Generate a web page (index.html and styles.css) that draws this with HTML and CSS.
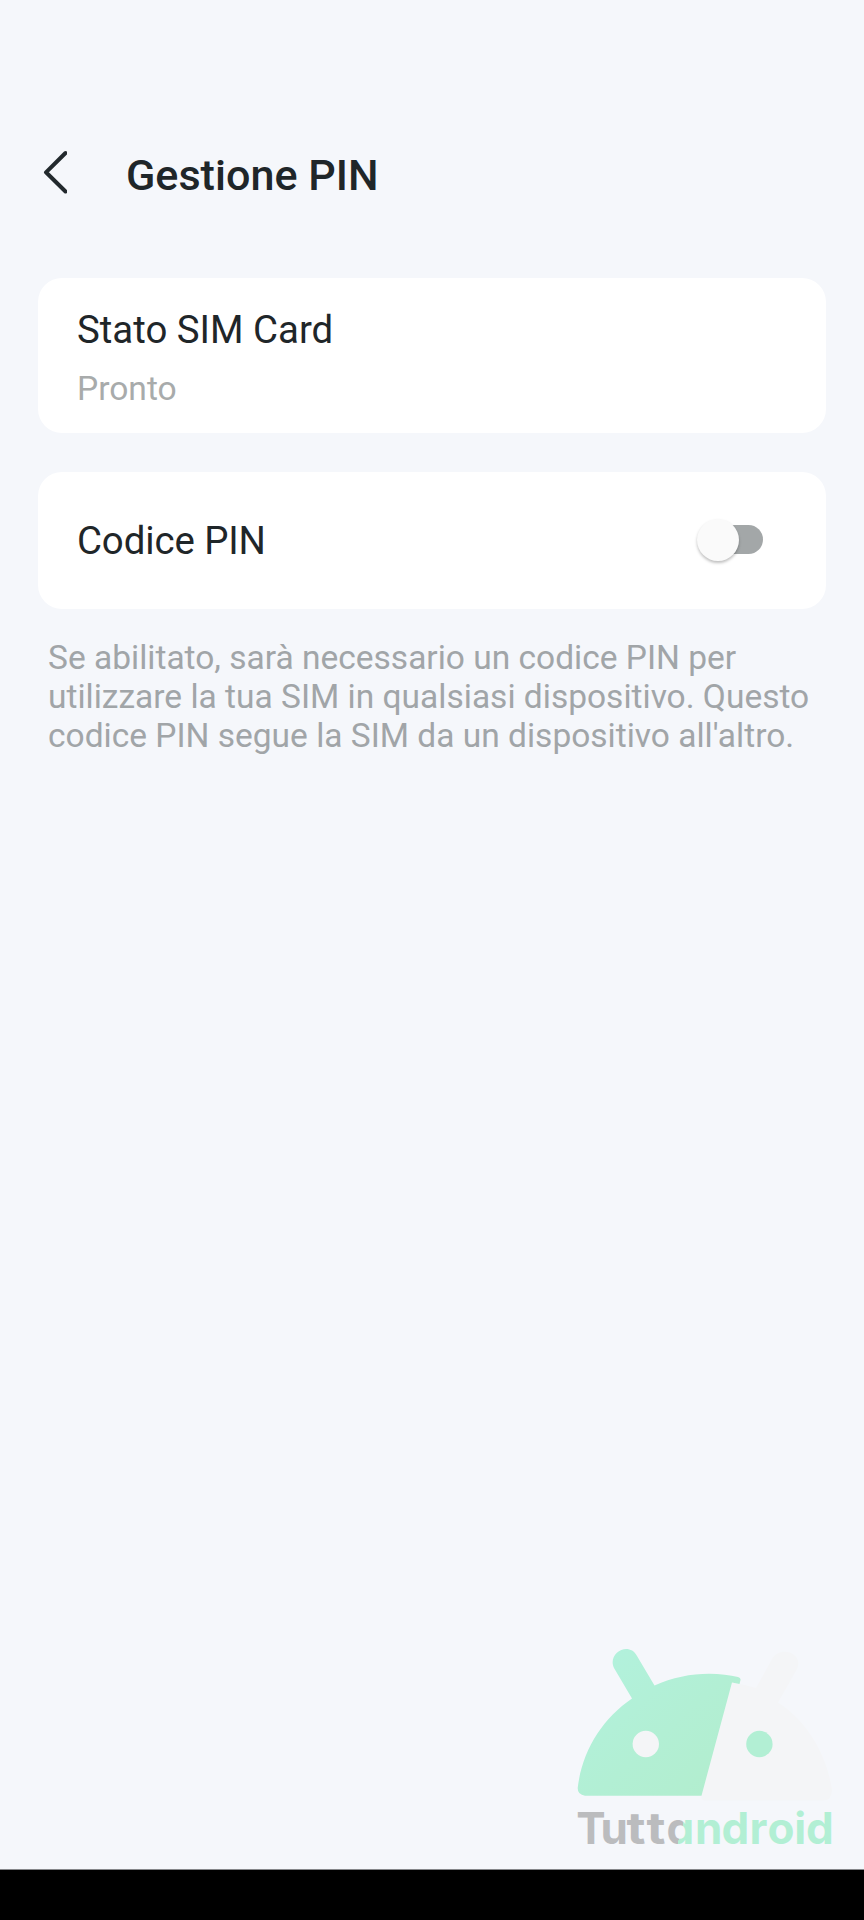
FILE: index.html
```
<!DOCTYPE html>
<html lang="it">
<head>
<meta charset="utf-8">
<title>Gestione PIN</title>
<link rel="stylesheet" href="styles.css">
</head>
<body>
<div class="screen">
  <header class="header">
    <svg class="back" width="24" height="44" viewBox="0 0 24 44" role="img" aria-label="Indietro"><path d="M22.500 3 3 22.300 22.500 41.500"/></svg>
    <h1 class="title">Gestione PIN</h1>
  </header>
  <main class="content">
    <section class="card card-status">
      <div class="label">Stato SIM Card</div>
      <div class="value">Pronto</div>
    </section>
    <section class="card card-pin">
      <div class="label label-pin">Codice PIN</div>
      <div class="switch" role="switch" aria-checked="false" aria-label="Codice PIN"><span class="thumb"></span></div>
    </section>
    <p class="hint">Se abilitato, sarà necessario un codice PIN per<br>utilizzare la tua SIM in qualsiasi dispositivo. Questo<br>codice PIN segue la SIM da un dispositivo all'altro.</p>
  </main>
  <svg class="watermark" width="300" height="220" viewBox="0 0 300 220">
    <defs>
      <linearGradient id="mint" x1="0" y1="0" x2="1" y2="1"><stop offset="0" stop-color="#b2f2de"/><stop offset=".55" stop-color="#b2efd4"/><stop offset="1" stop-color="#b2edcd"/></linearGradient>
      <linearGradient id="split" gradientUnits="userSpaceOnUse" x1="116.500" y1="195" x2="117.500" y2="195.270"><stop offset=".45" stop-color="#bbbcbe"/><stop offset=".55" stop-color="#b2efd4"/></linearGradient>
    </defs>
    <path class="pale" d="M168 46.500Q180 48.500 192 52L208 23C216 9 240 17 233 33L214 66.500C243 85 263 119 268 154Q267.500 164 260 164.500H140Q137 164 137.500 160Z"/>
    <path fill="url(#mint)" d="M68 62.500 50 32C43 17 65 5 73 20L90.500 49.500C108 41.500 127 37.700 145 37.700 156 37.700 166 39 174 41Q177 42 176.500 44L175.500 48 168 46.500 137.500 159.700H21Q13.500 159 13.700 152C18 115 38 83 68 62.500Z"/>
    <circle class="pale" cx="81.800" cy="108" r="13.200"/>
    <circle class="mint" cx="195.400" cy="108" r="13.200"/>
    <g class="wordmark">
      <text class="gray" x="12.300 36.500" y="208.300">Tu</text>
      <text class="gray" transform="translate(62.500 208.300) scale(1.180 1)" x="0 16.900" y="0">tt</text>
      <text fill="url(#split)" x="102.500 131 157.500 185.500 203.500 230.300 242" y="208.300">android</text>
    </g>
  </svg>
  <footer class="navbar"></footer>
</div>
</body>
</html>
```
FILE: styles.css
```
body {
  margin: 0;
  background: #f5f7fb;
  font-family: Roboto, sans-serif;
  color: #1f2629;
}
.screen {
  position: relative;
  display: flex;
  flex-direction: column;
  height: 1920px;
  box-sizing: border-box;
  overflow: hidden;
}
.header {
  display: flex;
  align-items: center;
  padding: 150px 43px 0;
  height: 50px;
  gap: 59px;
}
.back {
  margin-top: -6px;
  fill: none;
  stroke: #22292d;
  stroke-width: 4;
  stroke-linecap: round;
  stroke-linejoin: round;
}
.title {
  margin: 0;
  padding-top: 1px;
  font-size: 43.1px;
  font-weight: 500;
  line-height: 50px;
}
.content {
  flex: 1;
  padding: 78px 38.4px 0;
}
.card {
  display: flex;
  box-sizing: border-box;
  padding: 0 38.6px;
  border-radius: 24px;
  background: #fff;
}
.card-status {
  flex-direction: column;
  height: 155px;
  padding-top: 29px;
}
.card-pin {
  align-items: center;
  justify-content: space-between;
  height: 137px;
  margin-top: 39px;
  padding-right: 62.6px;
}
.label {
  font-size: 38.4px;
  line-height: 45px;
}
.label-pin {
  letter-spacing: -.1px;
}
.value {
  margin-top: 17px;
  font-size: 33.6px;
  line-height: 39px;
  color: #a8abab;
}
.switch {
  display: flex;
  align-items: center;
  width: 58px;
  height: 29px;
  margin-bottom: 2px;
  border-radius: 15px;
  background: #a3a7a8;
}
.thumb {
  flex: none;
  width: 42px;
  height: 42px;
  margin-left: -8px;
  border-radius: 50%;
  background: #fafafa;
  box-shadow: 0 2px 3px rgba(0, 0, 0, .25);
}
.hint {
  margin: 29px 0 0;
  padding-left: 9.6px;
  font-size: 33.5px;
  line-height: 39px;
  white-space: nowrap;
  color: #a1a5a8;
}
.watermark {
  position: absolute;
  left: 564px;
  top: 1636px;
}
.wordmark {
  font: 700 44px Inter, sans-serif;
  font-feature-settings: "cv11";
}
.pale {
  fill: #f4f5f7;
}
.mint {
  fill: #b2efd4;
}
.gray {
  fill: #bbbcbe;
}
.navbar {
  height: 51px;
  border-top: 1px solid #85878a;
  box-sizing: border-box;
  background: #000;
}
```
